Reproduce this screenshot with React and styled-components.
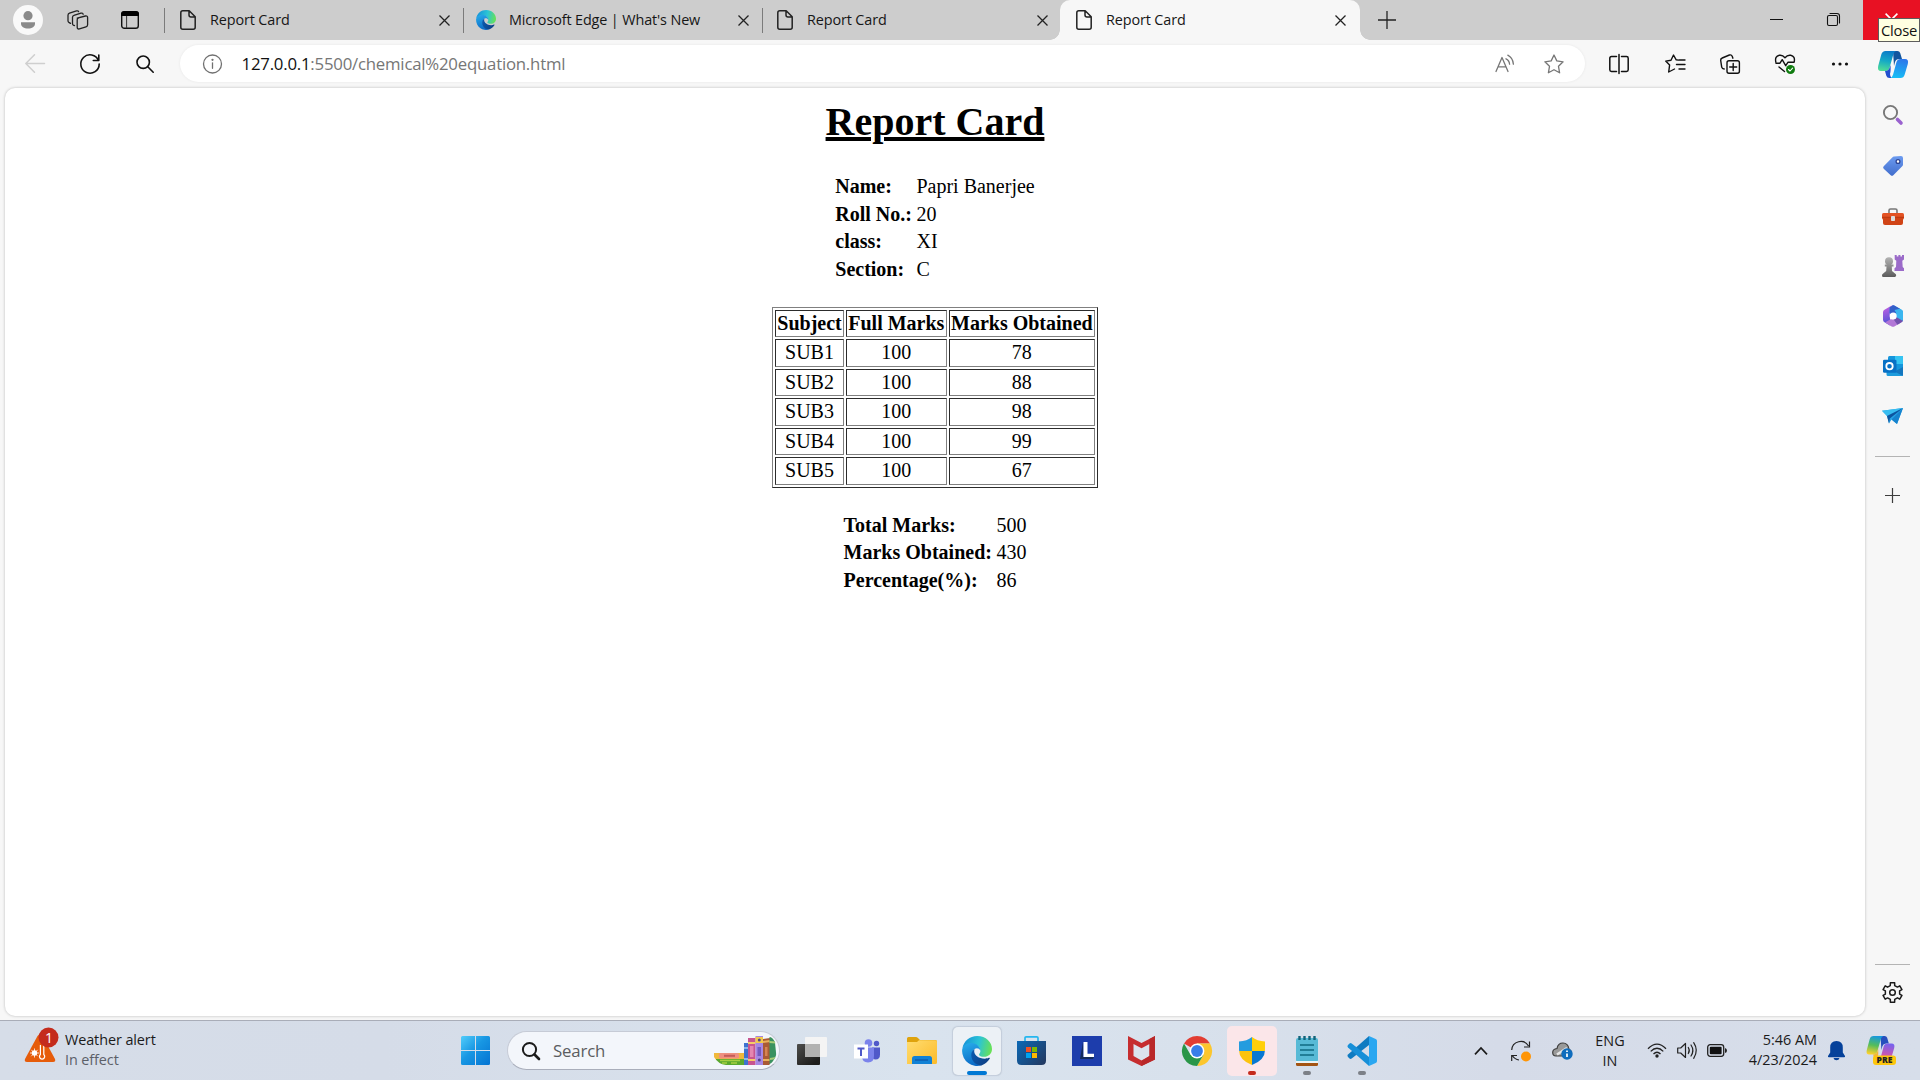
import React from 'react';
import styled, { createGlobalStyle } from 'styled-components';

const GlobalStyle = createGlobalStyle`
  html, body { margin: 0; padding: 0; height: 1080px; overflow: hidden; }
  * { box-sizing: border-box; }
  svg { display: block; flex: none; overflow: visible; }
`;

const Screen = styled.div`
  width: 1920px;
  height: 1080px;
  display: flex;
  flex-direction: column;
  background: #f7f7f7;
  font-family: 'Open Sans', 'Noto Sans', sans-serif;
  color: #1a1a1a;
  overflow: hidden;
`;

/* ---------- tab strip ---------- */
const TabStrip = styled.header`
  height: 40px;
  flex: none;
  display: flex;
  background: #cdcdcd;
`;
const StripTools = styled.div`
  width: 165px;
  display: flex;
  align-items: center;
  padding-left: 13px;
`;
const Avatar = styled.div`
  width: 30px;
  height: 30px;
  border-radius: 50%;
  background: #f9f9f9;
  margin-right: 24px;
`;
const ToolGap = styled.div`
  width: ${(p) => p.$w}px;
`;
const Divider = styled.div`
  width: 1px;
  height: 25px;
  margin-top: 1px;
  background: #7b7b7b;
`;
const TabDivider = styled(Divider)`
  margin-top: 8px;
`;
const Tab = styled.div`
  width: ${(p) => p.$w}px;
  height: 40px;
  display: flex;
  align-items: center;
  padding: 0 ${(p) => p.$right}px 0 ${(p) => p.$left}px;
  background: ${(p) => (p.$active ? '#f7f7f7' : 'transparent')};
  border-radius: 10px 10px 0 0;
  position: relative;
  ${(p) =>
    p.$active &&
    `
    &::before, &::after {
      content: '';
      position: absolute;
      bottom: 0;
      width: 10px;
      height: 10px;
    }
    &::before { left: -10px; background: radial-gradient(circle at 0 0, transparent 9.5px, #f7f7f7 10px); }
    &::after { right: -10px; background: radial-gradient(circle at 100% 0, transparent 9.5px, #f7f7f7 10px); }
  `}
`;
const TabTitle = styled.span`
  flex: 1;
  margin-left: ${(p) => p.$gap}px;
  font-size: 14.4px;
  line-height: 20px;
  letter-spacing: -0.12px;
  white-space: nowrap;
  color: #161616;
`;
const NewTab = styled.div`
  width: 54px;
  display: flex;
  align-items: center;
  justify-content: center;
`;
const WindowButtons = styled.div`
  margin-left: auto;
  display: flex;
`;
const WindowButton = styled.div`
  width: ${(p) => p.$w || 57}px;
  height: 40px;
  display: flex;
  justify-content: center;
  padding: 13px ${(p) => p.$pr || 0}px 0 0;
  background: ${(p) => (p.$danger ? '#e81123' : 'transparent')};
`;
const Tooltip = styled.div`
  position: absolute;
  left: 1878px;
  top: 18px;
  width: 42px;
  height: 24px;
  border: 1px solid #5d5d5d;
  background: #ffffe1;
  color: #111;
  font-size: 14.8px;
  line-height: 23px;
  letter-spacing: -0.25px;
  text-align: center;
  z-index: 2;
`;

/* ---------- toolbar ---------- */
const Toolbar = styled.div`
  height: 47px;
  flex: none;
  display: flex;
  align-items: flex-start;
  padding-top: 5px;
`;
const ToolSlot = styled.div`
  width: ${(p) => p.$w || 55}px;
  height: 38px;
  display: flex;
  align-items: center;
  justify-content: center;
`;
const NavButtons = styled.div`
  width: 180px;
  display: flex;
  padding-left: 8px;
`;
const AddressBar = styled.div`
  width: 1405px;
  height: 37px;
  display: flex;
  align-items: center;
  padding: 1px 21px 0 23px;
  border-radius: 19px;
  background: #fff;
  box-shadow: 0 0 3px rgba(0, 0, 0, 0.07);
`;
const Url = styled.span`
  flex: 1;
  margin-left: 18.5px;
  font-size: 16.8px;
  line-height: 24px;
  letter-spacing: -0.22px;
  color: #767676;
  b {
    font-weight: 400;
    color: #111;
  }
`;
const AddressActions = styled.div`
  display: flex;
  align-items: center;
  gap: 29px;
`;

/* ---------- page ---------- */
const Body = styled.div`
  height: 933px;
  flex: none;
  display: flex;
  padding: 1px 0 4px 5px;
`;
const Page = styled.main`
  width: 1860px;
  height: 928px;
  padding-top: 11px;
  background: #fff;
  border-radius: 10px;
  box-shadow: 0 0 3px rgba(0, 0, 0, 0.25);
  display: flex;
  flex-direction: column;
  align-items: center;
  font-family: 'Liberation Serif', 'Times New Roman', serif;
  color: #000;
`;
const Title = styled.h1`
  margin: 0 0 27px;
  font-size: 40px;
  line-height: 46px;
  font-weight: 700;
  text-decoration: underline;
`;
const InfoTable = styled.table`
  border-collapse: separate;
  border-spacing: 2.5px;
  font-size: 20px;
  line-height: 23px;
  margin-bottom: ${(p) => p.$after || 0}px;
  th,
  td {
    padding: 1.25px;
    text-align: left;
    white-space: nowrap;
  }
`;
const MarksTable = styled.table`
  width: 326px;
  margin-bottom: 23px;
  border: 1px solid;
  border-color: #808080 #2c2c2c #2c2c2c #808080;
  border-collapse: separate;
  border-spacing: 2.5px;
  font-size: 20px;
  line-height: 23px;
  th,
  td {
    padding: 1.25px;
    border: 1px solid;
    border-color: #2c2c2c #808080 #808080 #2c2c2c;
    text-align: center;
    white-space: nowrap;
  }
`;

/* ---------- sidebar ---------- */
const Sidebar = styled.aside`
  width: 55px;
  display: flex;
  flex-direction: column;
  align-items: center;
`;
const SideSlot = styled.div`
  width: 55px;
  height: ${(p) => p.$h || 50}px;
  padding-top: ${(p) => p.$pt || 0}px;
  display: flex;
  align-items: center;
  justify-content: center;
`;
const SideRule = styled.div`
  width: 35px;
  height: 1px;
  background: #b4b4b4;
`;
const SideSpacer = styled.div`
  flex: 1;
`;

/* ---------- taskbar ---------- */
const Taskbar = styled.footer`
  height: 60px;
  flex: none;
  display: flex;
  border-top: 1px solid #a9adb8;
  background: linear-gradient(90deg, #d6dde8 0%, #d5dce8 20%, #d9e3ee 48%, #d8e1ec 62%, #d5dbe8 78%, #d7deea 100%);
`;
const Weather = styled.div`
  width: 448px;
  display: flex;
  padding: 6px 0 0 24px;
  gap: 5px;
`;
const WeatherText = styled.div`
  font-size: 14.4px;
  line-height: 20px;
  letter-spacing: -0.08px;
  color: #1b1b1b;
  padding-top: 3px;
  small {
    display: block;
    font-size: 14.4px;
    color: #5c6068;
  }
`;
const TaskSlot = styled.div`
  width: 55px;
  height: 59px;
  display: flex;
  align-items: center;
  justify-content: center;
`;
const TaskTile = styled.div`
  width: ${(p) => p.$size || 48}px;
  height: ${(p) => p.$size || 48}px;
  display: flex;
  align-items: center;
  justify-content: center;
  position: relative;
  border-radius: 5px;
  background: ${(p) => p.$bg || 'transparent'};
  box-shadow: ${(p) => (p.$raised ? '0 0 1px 0.5px rgba(130,140,160,.25)' : 'none')};
`;
const RunMark = styled.i`
  position: absolute;
  bottom: ${(p) => p.$bottom || 0}px;
  left: calc(50% - ${(p) => p.$w / 2}px);
  width: ${(p) => p.$w}px;
  height: 4px;
  border-radius: 2px;
  background: ${(p) => p.$c};
`;
const SearchBox = styled.div`
  width: 273px;
  height: 39px;
  margin: 10px 4px 0 4px;
  padding: 0 2px 0 14px;
  display: flex;
  align-items: center;
  border: 1px solid #c6cbd6;
  border-bottom-color: #a9aebb;
  border-radius: 20px;
  background: #f3f6fb;
`;
const SearchLabel = styled.span`
  flex: 1;
  margin-left: 13px;
  font-size: 16.8px;
  letter-spacing: -0.15px;
  line-height: 24px;
  color: #5b5d60;
`;
const Tray = styled.div`
  margin-left: auto;
  display: flex;
  padding-right: 14px;
`;
const TraySlot = styled.div`
  width: ${(p) => p.$w}px;
  height: 59px;
  display: flex;
  align-items: center;
  justify-content: center;
`;
const TrayText = styled.div`
  width: ${(p) => p.$w}px;
  padding-top: ${(p) => p.$pt || 9}px;
  text-align: ${(p) => p.$align || 'center'};
  font-size: 14.4px;
  line-height: 20px;
  letter-spacing: ${(p) => p.$ls}px;
  color: #1b1b1b;
  white-space: nowrap;
`;

/* ---------- icons ---------- */
function Svg({ w, h, vb, children, ...rest }) {
  return (
    <svg width={w} height={h || w} viewBox={vb || `0 0 ${w} ${h || w}`} fill="none" {...rest}>
      {children}
    </svg>
  );
}
const line = (color = '#1b1b1b', sw = 1.4) => ({
  stroke: color,
  strokeWidth: sw,
  strokeLinecap: 'round',
  strokeLinejoin: 'round',
});

const PersonIcon = () => (
  <Svg w={30}>
    <circle cx="15" cy="10.7" r="4.6" fill="#8a8a8a" />
    <path d="M8 17.3h14v1.5c0 3-3 4.800-7 4.800s-7-1.800-7-4.800z" fill="#8a8a8a" />
  </Svg>
);
const WorkspacesIcon = () => (
  <Svg w={22} h={20} {...line('#222', 1.3)}>
    <path d="M10.200 8.200l8.200-2.200q2.200-.4 2.200 1.600v7.200q0 1.600-1.600 2.100l-6.600 2q-2.200.5-2.200-1.600v-7.600q0-1.200 1.200-1.600M7.500 15.600l-1.200-.5q-.8-.4-.8-1.600V7.300q0-1.500 1.400-1.900l7-2.200q2.200-.5 2.200 1.100M3.500 13.400l-1.600-1q-.9-.6-.9-1.700V5.200q0-1.600 1.500-2.100L9.500.9q1.800-.4 2.100.8" />
  </Svg>
);
const TabActionsIcon = () => (
  <Svg w={18}>
    <rect x=".7" y=".9" width="16.600" height="16.400" rx="2.600" {...line('#111', 1.4)} />
    <path d="M0 5V3q0-3 3-3h12q3 0 3 3v2z" fill="#000" />
    <path d="M5.600 5v12" stroke="#333" />
  </Svg>
);
const FileIcon = () => (
  <Svg w={16} h={20} {...line('#222', 1.5)}>
    <path d="M2.800.8h6.400l6 6v10.400q0 2-2 2H2.800q-2 0-2-2V2.800q0-2 2-2zM9 1v4q0 2 2 2h4" />
  </Svg>
);
const CloseIcon = ({ color = '#222', size = 11 }) => (
  <Svg w={size} vb="0 0 11 11">
    <path d="M.5.5l10 10M10.500.5l-10 10" stroke={color} strokeWidth="1.300" />
  </Svg>
);
const EdgeIcon = ({ size, id }) => (
  <Svg w={size} vb="0 0 30 30">
    <defs>
      <linearGradient id={`${id}a`} x1="2" y1="8" x2="30" y2="14" gradientUnits="userSpaceOnUse">
        <stop stopColor="#1796d8" />
        <stop offset=".5" stopColor="#2bc4d6" />
        <stop offset="1" stopColor="#6be34f" />
      </linearGradient>
      <linearGradient id={`${id}b`} x1="4" y1="8" x2="12" y2="30" gradientUnits="userSpaceOnUse">
        <stop stopColor="#26a8e8" />
        <stop offset="1" stopColor="#0a67c4" />
      </linearGradient>
      <linearGradient id={`${id}c`} x1="10" y1="16" x2="27" y2="27" gradientUnits="userSpaceOnUse">
        <stop stopColor="#0b59ae" />
        <stop offset="1" stopColor="#0e3f83" />
      </linearGradient>
    </defs>
    <path d="M.4 12.500C1.500 5 7.700 0 15.200 0 24 0 30 6.200 30 13c0 4.800-3.600 7.800-8 7.800-2.800 0-5-.9-5-2.300 0-.9 1.400-1.500 1.400-3.600 0-3-3-6.600-8-6.600-5 0-8.600 1.800-10 4.200z" fill={`url(#${id}a)`} />
    <path d="M.1 15C0 10.500 4 7 9 7c6 0 9.300 4 9.400 7.800-.6-1.700-2-2.500-3.500-2.500-2.700 0-5.200 3.200-4.600 7.200.7 5 4.600 8.800 9.200 9.800A15 15 0 0 1 .1 15z" fill={`url(#${id}b)`} />
    <path d="M12.700 13.300C10 14.300 8.700 17.500 9.600 21.500c1 4.500 5 7.900 9.800 7.900 3.500-1 6.500-3.400 8.400-6.800.3-.7-.3-1.100-.9-.8-1 .5-2.300.9-4.200.9-6 0-10.200-3.400-10.500-7.200 0-.8.1-1.500.5-2.200z" fill={`url(#${id}c)`} />
  </Svg>
);
const CopilotMark = ({ w, h, id, colors }) => (
  <Svg w={w} h={h} vb="0 0 30 27">
    <defs>
      <linearGradient id={`${id}a`} x1="10" y1="0" x2="6" y2="20" gradientUnits="userSpaceOnUse">
        <stop stopColor={colors[0]} />
        <stop offset=".5" stopColor={colors[1]} />
        <stop offset="1" stopColor={colors[2]} />
      </linearGradient>
      <linearGradient id={`${id}b`} x1="24" y1="8" x2="20" y2="27" gradientUnits="userSpaceOnUse">
        <stop stopColor={colors[3]} />
        <stop offset="1" stopColor={colors[4]} />
      </linearGradient>
    </defs>
    <path d="M15 0h4.500q2 0 2.700 2l1.800 6h-3q-3 0-4 3l-1 4z" fill={colors[5]} />
    <path d="M7.500 0H18q-2 .8-2.700 3.500L11.500 17q-.9 3-4 3H3q-4 0-2.800-5L3.300 3.500Q4.300 0 7.500 0z" fill={`url(#${id}a)`} />
    <path d="M7 20q3.500 0 4.500-3l1-3q.5 6-.5 9 0 2 1.500 4h-2q-2.500 0-3.200-2.200z" fill={colors[6]} />
    <path d="M22.500 8H27q4 0 2.800 5l-3.100 10.500q-1 3.500-4.200 3.500H12.500q1.800-.8 2.600-3.500L18.500 11q.9-3 4-3z" fill={`url(#${id}b)`} />
  </Svg>
);
const GearIcon = () => {
  const pts = [];
  for (let i = 0; i < 6; i++) {
    const a = (i * Math.PI) / 3 - Math.PI / 2;
    [[-0.22, 9.9], [0.22, 9.9], [0.3, 7.3], [0.74, 7.3]].forEach(([d, r]) => {
      pts.push(`${(10.5 + r * Math.cos(a + d)).toFixed(2)},${(10.5 + r * Math.sin(a + d)).toFixed(2)}`);
    });
  }
  return (
    <Svg w={21} {...line('#1b1b1b', 1.5)}>
      <polygon points={pts.join(' ')} />
      <circle cx="10.500" cy="10.500" r="2.800" />
    </Svg>
  );
};
const starPath = 'M10 1l2.800 5.900 6.300.9-4.600 4.500 1.100 6.500L10 15.700l-5.600 3.100 1.100-6.500L.9 7.800l6.300-.9z';

const tabs = [
  { title: 'Report Card', w: 298, left: 15, right: 13, gap: 14 },
  { title: "Microsoft Edge | What's New", w: 298, left: 12, right: 13, gap: 13, edge: true },
  { title: 'Report Card', w: 297, left: 14, right: 12, gap: 14 },
  { title: 'Report Card', w: 300, left: 16, right: 14, gap: 14, active: true },
];

const info = [
  ['Name:', 'Papri Banerjee'],
  ['Roll No.:', '20'],
  ['class:', 'XI'],
  ['Section:', 'C'],
];
const marks = [
  ['SUB1', '100', '78'],
  ['SUB2', '100', '88'],
  ['SUB3', '100', '98'],
  ['SUB4', '100', '99'],
  ['SUB5', '100', '67'],
];
const totals = [
  ['Total Marks:', '500'],
  ['Marks Obtained:', '430'],
  ['Percentage(%):', '86'],
];

const Pairs = ({ rows, after }) => (
  <InfoTable $after={after}>
    <tbody>
      {rows.map(([label, value]) => (
        <tr key={label}>
          <th>{label}</th>
          <td>{value}</td>
        </tr>
      ))}
    </tbody>
  </InfoTable>
);

function BrowserTabs() {
  return (
    <TabStrip>
      <StripTools>
        <Avatar>
          <PersonIcon />
        </Avatar>
        <WorkspacesIcon />
        <ToolGap $w={32} />
        <TabActionsIcon />
        <ToolGap $w={25} />
        <Divider />
      </StripTools>
      {tabs.map((t, i) => (
        <React.Fragment key={i}>
          <Tab $w={t.w} $left={t.left} $right={t.right} $active={t.active}>
            {t.edge ? <EdgeIcon size={20} id="tabEdge" /> : <FileIcon />}
            <TabTitle $gap={t.gap}>{t.title}</TabTitle>
            <CloseIcon />
          </Tab>
          {i < 2 && <TabDivider />}
        </React.Fragment>
      ))}
      <NewTab>
        <Svg w={18}>
          <path d="M9 0v18M0 9h18" stroke="#222" strokeWidth="1.300" />
        </Svg>
      </NewTab>
      <WindowButtons>
        <WindowButton $w={58}>
          <Svg w={13}>
            <path d="M0 6.500h13" stroke="#111" />
          </Svg>
        </WindowButton>
        <WindowButton $w={58} $pr={2}>
          <Svg w={13} {...line('#111', 1.1)}>
            <rect x=".5" y="2.500" width="10" height="10" rx="1.500" />
            <path d="M3 .5h7q2.500 0 2.500 2.500v7" />
          </Svg>
        </WindowButton>
        <WindowButton $danger>
          <CloseIcon color="#fff" size={13} />
        </WindowButton>
      </WindowButtons>
    </TabStrip>
  );
}

function BrowserToolbar() {
  return (
    <Toolbar>
      <NavButtons>
        <ToolSlot $w={54}>
          <Svg w={20} {...line('#cfcfcf', 1.5)}>
            <path d="M19.500 9.500H1M9.500.8L.8 9.500l8.700 8.700" />
          </Svg>
        </ToolSlot>
        <ToolSlot $w={56}>
          <Svg w={20} {...line('#111', 1.6)}>
            <path d="M18.500 6.500A9.200 9.200 0 1 0 19.200 10M18.800 1v5.500h-5.500" />
          </Svg>
        </ToolSlot>
        <ToolSlot $w={54}>
          <Svg w={18} {...line('#111', 1.6)}>
            <circle cx="7.200" cy="7.200" r="6.200" />
            <path d="M11.800 11.800L17.200 17.200" />
          </Svg>
        </ToolSlot>
      </NavButtons>
      <AddressBar>
        <Svg w={20} {...line('#707070', 1.3)}>
          <circle cx="9.500" cy="10" r="9" />
          <path d="M9.500 8.800v5.500" />
          <circle cx="9.500" cy="5.800" r=".5" fill="#707070" />
        </Svg>
        <Url>
          <b>127.0.0.1</b>:5500/chemical%20equation.html
        </Url>
        <AddressActions>
          <Svg w={20} {...line('#767676', 1.3)}>
            <path d="M1 17.500L7 3.500l6 14M3.200 12.800h7.600M11 4.800q3.300 1.500 3.600 5.400M12.800 1.200q5 2.600 5.600 9" />
          </Svg>
          <Svg w={20} {...line('#767676', 1.3)}>
            <path d={starPath} />
          </Svg>
        </AddressActions>
      </AddressBar>
      <ToolSlot $w={67}>
        <Svg w={20} {...line('#111', 1.5)}>
          <path d="M7.500 2.500h-5q-1.700 0-1.700 1.700v11.600q0 1.700 1.700 1.700h5M12.500 2.500h5q1.700 0 1.700 1.700v11.600q0 1.700-1.700 1.700h-5M10 .5v19" />
        </Svg>
      </ToolSlot>
      <ToolSlot $w={46}>
        <Svg w={20} {...line('#111', 1.4)}>
          <path d="M13.200 6.100l-2-.3L8.500 1 6 6.200l-5.300.9 3.900 4-.9 6.900L9.500 15M14 6h6M11.500 10.500H20M14 15h6" />
        </Svg>
      </ToolSlot>
      <ToolSlot $w={64}>
        <Svg w={20} {...line('#111', 1.4)}>
          <rect x="7" y="6.800" width="12.400" height="12.500" rx="2" />
          <path d="M13.200 9.500v7M9.700 13h7M4.200 15q-2-.2-2.500-1.900L.7 6.500q-.3-1.800 1.500-2.500l7.200-3q2-.6 2.800 1.200l.7 2" />
        </Svg>
      </ToolSlot>
      <ToolSlot $w={46}>
        <Svg w={20} {...line('#111', 1.4)}>
          <path d="M.8 8Q-.4 2.200 4.300 1.300 7.500.7 10 3.700q2.500-3 5.700-2.400Q20.400 2.200 19.200 8M1 9.200h4l2.200-3.500 3.500 6 2.200-3.400h6M4 13l5.500 4.500" />
          <circle cx="15.500" cy="15.500" r="4.500" fill="#107c10" stroke="none" />
          <path d="M13.500 15.500l1.500 1.500 2.600-2.800" stroke="#fff" strokeWidth="1.100" />
        </Svg>
      </ToolSlot>
      <ToolSlot $w={63}>
        <Svg w={18} h={4}>
          <circle cx="2.500" cy="2" r="1.600" fill="#111" />
          <circle cx="9" cy="2" r="1.600" fill="#111" />
          <circle cx="15.500" cy="2" r="1.600" fill="#111" />
        </Svg>
      </ToolSlot>
      <ToolSlot $w={43}>
        <CopilotMark w={30} h={27} id="cp" colors={['#0b7ac8', '#15a9c6', '#50dd96', '#2c76ea', '#16bdf5', '#13569f', '#2350cf']} />
      </ToolSlot>
    </Toolbar>
  );
}

function EdgeSidebar() {
  return (
    <Sidebar>
      <SideSlot $h={54}>
        <Svg w={20}>
          <circle cx="7.500" cy="7.500" r="6.600" stroke="#777" strokeWidth="1.900" />
          <path d="M14.500 14.500l3.500 3.500" stroke="#9a62cf" strokeWidth="3.600" strokeLinecap="round" />
        </Svg>
      </SideSlot>
      <SideSlot $h={48}>
        <Svg w={20}>
          <defs>
            <linearGradient id="tag" x1="10" y1="0" x2="10" y2="20" gradientUnits="userSpaceOnUse">
              <stop stopColor="#6c9bf0" />
              <stop offset="1" stopColor="#416dcc" />
            </linearGradient>
          </defs>
          <path d="M11 .6L18 0q2 0 2 2v6.500q0 1-.8 1.800L10.300 19.200q-1.300 1.300-2.600 0L.7 12.700q-1.200-1.200 0-2.500L9.300 1.400Q10 .7 11 .6z" fill="url(#tag)" />
          <circle cx="15" cy="5.500" r="1.900" fill="#fff" stroke="#2d4493" strokeWidth="1.300" />
        </Svg>
      </SideSlot>
      <SideSlot $h={53}>
        <Svg w={22} h={18}>
          <path d="M7 5.500V2.500Q7 1 8.500 1h5Q15 1 15 2.500v3" stroke="#777" strokeWidth="1.600" />
          <rect y="5" width="22" height="6.500" rx="1.500" fill="#e35324" />
          <path d="M1 10h20v5q0 2-2 2H3q-2 0-2-2z" fill="#d04416" />
          <path d="M0 9.300h22" stroke="#a92e09" strokeWidth=".8" />
          <rect x="9" y="8" width="4" height="5" rx=".8" fill="#ddd" />
        </Svg>
      </SideSlot>
      <SideSlot $h={46}>
        <Svg w={22}>
          <defs>
            <linearGradient id="pawn" x1="0" y1="3" x2="0" y2="22" gradientUnits="userSpaceOnUse">
              <stop stopColor="#b0b0b0" />
              <stop offset="1" stopColor="#5c5c5c" />
            </linearGradient>
          </defs>
          <path d="M12.700 0h2v1.500h1.700V0h2v1.500H20V0h2v4.500l-1.700 1.200.4 6.300 1.300 1.200V16h-9.500v-2.800L14 12l.3-6.300-1.600-1.200z" fill="#9b6bc9" />
          <circle cx="7" cy="6.200" r="4" fill="url(#pawn)" />
          <path d="M2.800 9.500h8.700v2H9.800L10 16l3 2.500q1.200.6 1.200 1.800T13 22H1.200Q0 22 0 20.500T1.200 18.500L4.200 16l.3-4.500H2.800z" fill="url(#pawn)" />
        </Svg>
      </SideSlot>
      <SideSlot $h={54}>
        <Svg w={20} h={22}>
          <defs>
            <linearGradient id="m3a" x1="0" y1="5" x2="5" y2="20" gradientUnits="userSpaceOnUse">
              <stop stopColor="#b05de0" />
              <stop offset="1" stopColor="#4751d5" />
            </linearGradient>
          </defs>
          <path d="M10 .3L7.800 1 1.500 4.700Q0 5.600 0 7.300v7.400q0 1.700 1.500 2.600L7 20.500v-6.600L6.700 8l6.800-5.800L11.800.7Q10.900.2 10 .3z" fill="url(#m3a)" />
          <path d="M10 .3q1 0 1.800.4l6.700 4Q20 5.600 20 7.300v7.400q0 1-.5 1.700l-6.300-4V8.500L6.700 8V3z" fill="#2d9be8" />
          <path d="M10 .3L6.700 2.500V9l6.500-.5V7.500L17 3.800 12 .9z" fill="#345fc8" />
          <path d="M2 17.500l5.500-3.200h4.300l7.800 1.800q-.4.800-1.100 1.200l-6.700 4q-1.800 1-3.600 0z" fill="#b277d6" />
          <path d="M13.200 12L20 9v5.700q0 1.700-1.500 2.600l-4 2.400-4-5.400z" fill="#7351ad" />
          <path d="M11.500 5L17 3.800l1.500.9Q20 5.600 20 7.300v7.400l-.3 1-6.500-3.700V8z" fill="#3bb6ef" />
          <circle cx="10.200" cy="11" r="3.500" fill="#fff" />
        </Svg>
      </SideSlot>
      <SideSlot $h={46}>
        <Svg w={20}>
          <rect x="5" width="15" height="18" rx="1.500" fill="#1596dc" />
          <rect x="12" width="8" height="8" fill="#35c4f2" />
          <path d="M3.500 11.500L12 15l8-4v7.500q0 1.500-1.500 1.500H5q-1.500 0-1.500-1.500z" fill="#1d9bdc" />
          <path d="M20 11l-8.500 4.500L20 20z" fill="#1476be" />
          <rect y="3.800" width="13.500" height="13" rx="1.300" fill="#0871c5" />
          <circle cx="6.500" cy="10.200" r="3.200" stroke="#fff" strokeWidth="1.800" />
        </Svg>
      </SideSlot>
      <SideSlot $h={54}>
        <Svg w={21} h={16}>
          <path d="M0 2.700L21 0l-6 16-5.500-4.500L7 15.500 5 8z" fill="#25a3e6" />
          <path d="M0 2.700L21 0 5 8z" fill="#38bdf0" />
          <path d="M21 0L5 8l2 7.500.8-5z" fill="#0d559f" />
          <path d="M21 0L9.500 11.500l5.500 4.500z" fill="#1683ce" />
        </Svg>
      </SideSlot>
      <SideSlot $h={13} />
      <SideRule />
      <SideSlot $h={77}>
        <Svg w={15}>
          <path d="M7.500 0v15M0 7.500h15" stroke="#3d3d3d" strokeWidth="1.200" />
        </Svg>
      </SideSlot>
      <SideSpacer />
      <SideRule />
      <SideSlot $h={51} $pt={4}>
        <GearIcon />
      </SideSlot>
    </Sidebar>
  );
}

const BooksArt = () => (
  <Svg w={63} h={29}>
    <defs>
      <clipPath id="booksClip">
        <path d="M0 0h56q7 6 7 13 0 10-8 16H12Q4 28 0 21z" />
      </clipPath>
    </defs>
    <g clipPath="url(#booksClip)">
      <rect x="0" y="17" width="30" height="7" fill="#efb83c" />
      <rect x="5" y="17" width="20" height="5.500" rx="1.500" fill="#ee8f80" />
      <rect x="10" y="18.800" width="11" height="2" fill="#c35c58" />
      <rect x="2" y="23" width="29" height="6" fill="#5ba82f" />
      <path d="M6 24.500h20M8 27h5M17 27h6" stroke="#a8cf42" strokeWidth="1.500" />
      <rect x="30" y="7" width="4" height="22" fill="#3e73cf" />
      <path d="M30 12h4M30 23h4" stroke="#a6d0f3" strokeWidth="1.500" />
      <rect x="34" y="2" width="7.500" height="27" fill="#c8558f" />
      <path d="M34 7h7.500M34 24h7.500" stroke="#f6ca69" strokeWidth="2" />
      <rect x="36" y="10" width="3.500" height="11" fill="#e486b0" />
      <rect x="41.500" y="0" width="7.500" height="29" fill="#a787e3" />
      <rect x="41.500" y="1" width="7.500" height="6" fill="#f2c94b" />
      <rect x="43.500" y="11" width="3.500" height="9" fill="#745abf" />
      <circle cx="45.300" cy="4" r="1.500" fill="#514285" />
      <circle cx="45.300" cy="24" r="1.500" fill="#514285" />
      <path d="M49 3l7-1v27h-7z" fill="#a95a35" />
      <path d="M49 6l7-1M49 24h7" stroke="#eab05c" strokeWidth="2" />
      <path d="M51 11h2.500v9H51z" fill="#d68352" />
      <path d="M55.500 1l5 1 2.500 24-7.500 2z" fill="#3a925f" />
      <path d="M55.500 6l6 .5M56 23l6-1" stroke="#a9cc77" strokeWidth="2" />
    </g>
  </Svg>
);

function WindowsTaskbar() {
  return (
    <Taskbar>
      <Weather>
        <Svg w={36} h={36}>
          <path d="M13.500 9q2.500-3.500 5 0L31 32q1 3-2 3H3q-3 0-2-3z" fill="#e65c0a" />
          <circle cx="10.500" cy="26" r="2.700" fill="#fff" />
          <path d="M10.500 21.500v9M6 26h9M7.300 22.800l6.400 6.400M13.700 22.800l-6.400 6.400" stroke="#fff" strokeWidth=".8" />
          <path d="M16.400 18v9.500a2.600 2.600 0 1 0 3.400 0V18" stroke="#fff" strokeWidth="1.200" />
          <circle cx="24.500" cy="10.500" r="10" fill="#c42b1c" />
          <text x="25" y="15.500" fill="#fff" fontSize="14" textAnchor="middle" fontFamily="Open Sans">1</text>
        </Svg>
        <WeatherText>
          Weather alert
          <small>In effect</small>
        </WeatherText>
      </Weather>
      <TaskSlot>
        <Svg w={29}>
          <defs>
            <linearGradient id="win" x1="0" y1="0" x2="29" y2="29" gradientUnits="userSpaceOnUse">
              <stop stopColor="#52cdfb" />
              <stop offset=".45" stopColor="#1897e3" />
              <stop offset="1" stopColor="#0473d2" />
            </linearGradient>
          </defs>
          <path d="M1.500 0H14v14H0V1.500Q0 0 1.500 0zM15 0h12.500Q29 0 29 1.500V14H15zM0 15h14v14H1.500Q0 29 0 27.500zM15 15h14v12.500q0 1.500-1.500 1.500H15z" fill="url(#win)" />
        </Svg>
      </TaskSlot>
      <SearchBox>
        <Svg w={18} {...line('#1b1b1b', 2)}>
          <circle cx="7.500" cy="7.500" r="6.600" />
          <path d="M12.500 12.500L17 17" strokeWidth="2.600" />
        </Svg>
        <SearchLabel>Search</SearchLabel>
        <BooksArt />
      </SearchBox>
      <TaskSlot>
        <Svg w={30} h={28}>
          <defs>
            <linearGradient id="tv" x1="0" y1="8" x2="15" y2="28" gradientUnits="userSpaceOnUse">
              <stop stopColor="#4c4c4a" />
              <stop offset="1" stopColor="#1e1e1c" />
            </linearGradient>
          </defs>
          <rect y="7" width="23" height="21" rx="1" fill="url(#tv)" />
          <rect x="8" width="22" height="20" rx="1" fill="#f4f4f4" />
          <rect x="8" y="7" width="15" height="13" fill="#b2b2b1" />
        </Svg>
      </TaskSlot>
      <TaskSlot>
        <Svg w={26} h={24}>
          <circle cx="14.500" cy="4" r="3.800" fill="#7b83eb" />
          <circle cx="22.500" cy="4.500" r="2.700" fill="#5059c9" />
          <path d="M18 8.500h8v7q0 5-4.500 5-3.500 0-3.500-4z" fill="#5059c9" />
          <path d="M8 8.500h12v8.500q0 6.500-6 6.500T8 17z" fill="#7b83eb" />
          <rect y="5.500" width="14" height="14" fill="#fff" />
          <path d="M3.500 8.500h7v2H8v6.500H6v-6.500H3.500z" fill="#5059c9" />
        </Svg>
      </TaskSlot>
      <TaskSlot>
        <Svg w={30} h={27}>
          <defs>
            <linearGradient id="fold" x1="5" y1="3" x2="26" y2="27" gradientUnits="userSpaceOnUse">
              <stop stopColor="#ffda6b" />
              <stop offset="1" stopColor="#fcbd2e" />
            </linearGradient>
          </defs>
          <path d="M0 1.500Q0 0 1.500 0H9q1 0 1.700.7L13 3h15.500Q30 3 30 4.500V8H0z" fill="#dfa30d" />
          <path d="M0 5h10l2-1.800h16.500Q30 3.200 30 4.700V25.500Q30 27 28.500 27H0z" fill="url(#fold)" />
          <path d="M5 27v-5.500Q5 19 7.500 19h15q2.500 0 2.500 2.500V27z" fill="#1181d5" />
          <path d="M8 23h13" stroke="#0c4b9b" />
        </Svg>
      </TaskSlot>
      <TaskSlot>
        <TaskTile $bg="#ecf1f6" $raised>
          <EdgeIcon size={30} id="taskEdge" />
          <RunMark $w={20} $c="#0078d4" />
        </TaskTile>
      </TaskSlot>
      <TaskSlot>
        <Svg w={29}>
          <defs>
            <linearGradient id="store" x1="0" y1="4" x2="29" y2="29" gradientUnits="userSpaceOnUse">
              <stop stopColor="#0b6ab8" />
              <stop offset="1" stopColor="#24375d" />
            </linearGradient>
          </defs>
          <path d="M8 5.500V2q0-1.200 1.200-1.200h10.600Q21 .8 21 2v3.500" stroke="#25b7ef" strokeWidth="1.700" />
          <path d="M0 5h29v19.500q0 4.500-4.500 4.500h-20Q0 29 0 24.500z" fill="url(#store)" />
          <path d="M9 11h5v5H9z" fill="#f25022" />
          <path d="M15 11h5v5h-5z" fill="#7fba00" />
          <path d="M9 17h5v5H9z" fill="#00a4ef" />
          <path d="M15 17h5v5h-5z" fill="#ffb900" />
        </Svg>
      </TaskSlot>
      <TaskSlot>
        <Svg w={30}>
          <rect width="30" height="30" fill="#1d3dac" />
          <path d="M11 6L8 23h13l1-2H11z" fill="#132a5c" />
          <path d="M11.500 6v15H22v-3.300h-6.500V6z" fill="#fff" />
        </Svg>
      </TaskSlot>
      <TaskSlot>
        <Svg w={27} h={30}>
          <path d="M0 0l13.500 7L27 0v23.500L13.500 30 0 23.500z" fill="#c62d2f" />
          <path d="M5.500 8l8 4.300 8-4.300v12l-8 4.500-8-4.500z" fill="#dbe3ed" />
          <path d="M13.500 30L27 23.500V0l-5.500 3v17L13.500 25z" fill="#b92829" />
        </Svg>
      </TaskSlot>
      <TaskSlot>
        <Svg w={30}>
          <path d="M15 15L2 7.500A15 15 0 0 1 28 7.500H15z" fill="#e23d32" />
          <path d="M15 15v-7.500h13A15 15 0 0 1 15 30l6.500-11.200z" fill="#fcc62d" />
          <path d="M15 15l6.500 3.800L15 30A15 15 0 0 1 2 7.500l6.500 11.300z" fill="#299648" />
          <circle cx="15" cy="15" r="7.400" fill="#fff" />
          <circle cx="15" cy="15" r="5.900" fill="#387ee8" />
        </Svg>
      </TaskSlot>
      <TaskSlot>
        <TaskTile $size={50} $bg="#fbe6e9">
          <Svg w={26} h={28}>
            <defs>
              <clipPath id="shield">
                <path d="M13 0q5 4 13 4.500V13q0 10-13 15Q0 23 0 13V4.500Q8 4 13 0z" />
              </clipPath>
            </defs>
            <g clipPath="url(#shield)">
              <path d="M0 0h13v14H0z" fill="#249cdf" />
              <path d="M13 0h13v14H13z" fill="#ffcf08" />
              <path d="M0 14h13v14H0z" fill="#fcc30d" />
              <path d="M13 14h13v14H13z" fill="#0878d2" />
            </g>
          </Svg>
          <RunMark $w={8} $c="#c42b1c" $bottom={1} />
        </TaskTile>
      </TaskSlot>
      <TaskSlot>
        <TaskTile>
          <Svg w={22} h={30}>
            <rect y="2" width="22" height="24" rx="2" fill="#57bad6" />
            <path d="M3.500 0v4M8.500 0v4M13.500 0v4M18.500 0v4" stroke="#12647b" strokeWidth="2.400" />
            <path d="M4 9h14M4 14h14M4 19h14" stroke="#116b83" strokeWidth="1.700" />
            <path d="M0 25h22v2H0z" fill="#e9f4f6" />
            <path d="M0 27h22v1.500q0 1.500-1.500 1.500h-19Q0 30 0 28.500z" fill="#a35413" />
          </Svg>
          <RunMark $w={8} $c="#7c8087" />
        </TaskTile>
      </TaskSlot>
      <TaskSlot>
        <TaskTile>
          <Svg w={30}>
            <path d="M22 0L1 18.500q-1.200 1.200 0 2.500L2.500 22.500q1 .8 2.200 0L22 9z" fill="#0f7bc1" />
            <path d="M22 30L1 11.500q-1.200-1.200 0-2.500L2.500 7.500q1-.8 2.200 0L22 21z" fill="#168fd8" />
            <path d="M22 0l6.700 3Q30 3.700 30 5v20q0 1.300-1.300 2L22 30z" fill="#2aa7f1" />
          </Svg>
          <RunMark $w={8} $c="#7c8087" />
        </TaskTile>
      </TaskSlot>
      <Tray>
        <TraySlot $w={34}>
          <Svg w={14} h={8}>
            <path d="M1 7.300L7 1l6 6.300" stroke="#1b1b1b" strokeWidth="1.700" />
          </Svg>
        </TraySlot>
        <TraySlot $w={46}>
          <Svg w={20}>
            <path d="M.7 9A9 9 0 0 1 17.500 5M18.500.5V6H13M8 19Q4 18.500 1.300 14.500M.7 20v-5.500H6" stroke="#222" strokeWidth="1.200" />
            <circle cx="15" cy="15.500" r="5" fill="#ff9506" />
          </Svg>
        </TraySlot>
        <TraySlot $w={36}>
          <Svg w={21} h={18}>
            <path d="M5 14H4Q.7 14 .7 10.500T5 6.500Q6 1 11 1t6 6q2.500 1.500 2.500 4L14 14z" fill="#999" stroke="#3d3d3d" strokeWidth="1.200" />
            <path d="M5 12.500L15 6" stroke="#e6e6e6" strokeWidth="2.500" />
            <circle cx="15" cy="12" r="5.700" fill="#0f6cbd" />
            <path d="M15 11.500V15M15 8.500v1.600" stroke="#fff" strokeWidth="1.700" />
          </Svg>
        </TraySlot>
        <TrayText $w={60} $pt={10} $ls={0}>
          ENG
          <br />
          IN
        </TrayText>
        <TraySlot $w={34}>
          <Svg w={20} h={15}>
            <path d="M1 5.700Q10-3.500 19 5.700M3.700 8.400q6.300-6.300 12.600 0M6.500 11q3.500-3.500 7 0" stroke="#222" strokeWidth="1.300" />
            <circle cx="10" cy="13" r="1.700" fill="#222" />
          </Svg>
        </TraySlot>
        <TraySlot $w={26}>
          <Svg w={20} h={17} {...line('#222', 1.2)}>
            <path d="M.7 6h3L8.500 1.500v14L3.700 11h-3zM11.300 5.500q2 3 0 6M14 3q3.700 5.500 0 11M16.700.7q5.200 7.800 0 15.600" />
          </Svg>
        </TraySlot>
        <TraySlot $w={34}>
          <Svg w={20} h={13}>
            <rect x=".7" y=".7" width="16" height="11.600" rx="2.500" stroke="#222" strokeWidth="1.300" />
            <rect x="2.800" y="2.800" width="11.800" height="7.400" rx="1" fill="#111" />
            <path d="M18 4q2 .5 2 2.500T18 9z" fill="#222" />
          </Svg>
        </TraySlot>
        <TrayText $w={83} $align="right" $ls={0}>
          5:46 AM
          <br />
          4/23/2024
        </TrayText>
        <TraySlot $w={38}>
          <Svg w={17} h={20}>
            <path d="M8.500 0q6.300 0 6.300 6.500v5L17 15q.5 1.300-1 1.300H1Q-.5 16.300 0 15l2.200-3.500v-5Q2.200 0 8.500 0zM5.500 17h6q-.5 2.200-3 2.200t-3-2.200z" fill="#05419a" />
          </Svg>
        </TraySlot>
        <TraySlot $w={51}>
          <Svg w={30}>
            <CopilotMark w={29} h={25} id="pre" colors={['#1698df', '#53bd5c', '#ffd12b', '#7563ef', '#f44f93', '#274fbd', '#f3b63b']} />
            <rect x="7" y="19.500" width="23" height="9.500" rx="3" fill="#fdc60d" />
            <text x="18.500" y="27.400" fontFamily="Open Sans" fontSize="8.500" fontWeight="800" textAnchor="middle" fill="#222">PRE</text>
          </Svg>
        </TraySlot>
      </Tray>
    </Taskbar>
  );
}

export default function App() {
  return (
    <>
      <GlobalStyle />
      <Screen>
        <BrowserTabs />
        <Tooltip>Close</Tooltip>
        <BrowserToolbar />
        <Body>
          <Page>
            <Title>Report Card</Title>
            <Pairs rows={info} after={22.5} />
            <MarksTable>
              <thead>
                <tr>
                  <th>Subject</th>
                  <th>Full Marks</th>
                  <th>Marks Obtained</th>
                </tr>
              </thead>
              <tbody>
                {marks.map((r) => (
                  <tr key={r[0]}>
                    {r.map((c, i) => (
                      <td key={i}>{c}</td>
                    ))}
                  </tr>
                ))}
              </tbody>
            </MarksTable>
            <Pairs rows={totals} />
          </Page>
          <EdgeSidebar />
        </Body>
        <WindowsTaskbar />
      </Screen>
    </>
  );
}
